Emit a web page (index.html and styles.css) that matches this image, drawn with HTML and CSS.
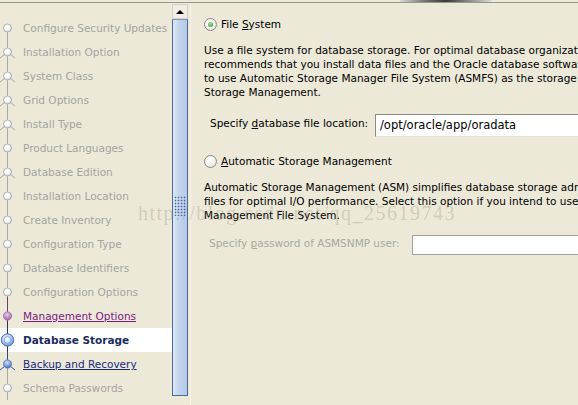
FILE: index.html
```html
<!DOCTYPE html>
<html>
<head>
<meta charset="utf-8">
<link rel="stylesheet" href="styles.css">
</head>
<body>
<div class="topbar"><div class="banner"></div></div>
<div class="main">
  <ul class="steps">
    <li class="step off"><svg class="node" viewBox="0 0 16 24"><defs><radialGradient id="gw" cx="0.45" cy="0.4" r="0.6"><stop offset="0" stop-color="#ffffff"/><stop offset="0.6" stop-color="#f4f4f4"/><stop offset="1" stop-color="#c8c8c8"/></radialGradient><radialGradient id="gp" cx="0.45" cy="0.35" r="0.65"><stop offset="0" stop-color="#e8d0ec"/><stop offset="1" stop-color="#9a5aa0"/></radialGradient><radialGradient id="gb" cx="0.45" cy="0.35" r="0.65"><stop offset="0" stop-color="#d6e4fa"/><stop offset="1" stop-color="#3c68b8"/></radialGradient><radialGradient id="gs" cx="0.45" cy="0.4" r="0.6"><stop offset="0" stop-color="#ffffff"/><stop offset="0.5" stop-color="#c8dcf8"/><stop offset="1" stop-color="#5a88d0"/></radialGradient></defs><line x1="7.5" y1="12" x2="7.5" y2="24" stroke="#a8a8a8"/><circle cx="7.5" cy="12" r="4" fill="url(#gw)" stroke="#b4b4b4"/></svg><span class="label">Configure Security Updates</span></li>
    <li class="step off"><svg class="node" viewBox="0 0 16 24"><line x1="7.5" y1="0" x2="7.5" y2="24" stroke="#a8a8a8"/><path d="M0 18 L7.5 12 L15 18" fill="none" stroke="#a8a8a8"/><circle cx="7.5" cy="12" r="4" fill="url(#gw)" stroke="#b4b4b4"/></svg><span class="label">Installation Option</span></li>
    <li class="step off"><svg class="node" viewBox="0 0 16 24"><line x1="7.5" y1="0" x2="7.5" y2="24" stroke="#a8a8a8"/><path d="M0 18 L7.5 12 L15 18" fill="none" stroke="#a8a8a8"/><circle cx="7.5" cy="12" r="4" fill="url(#gw)" stroke="#b4b4b4"/></svg><span class="label">System Class</span></li>
    <li class="step off"><svg class="node" viewBox="0 0 16 24"><line x1="7.5" y1="0" x2="7.5" y2="24" stroke="#a8a8a8"/><path d="M0 18 L7.5 12 L15 18" fill="none" stroke="#a8a8a8"/><circle cx="7.5" cy="12" r="4" fill="url(#gw)" stroke="#b4b4b4"/></svg><span class="label">Grid Options</span></li>
    <li class="step off"><svg class="node" viewBox="0 0 16 24"><line x1="7.5" y1="0" x2="7.5" y2="24" stroke="#a8a8a8"/><path d="M0 18 L7.5 12 L15 18" fill="none" stroke="#a8a8a8"/><circle cx="7.5" cy="12" r="4" fill="url(#gw)" stroke="#b4b4b4"/></svg><span class="label">Install Type</span></li>
    <li class="step off"><svg class="node" viewBox="0 0 16 24"><line x1="7.5" y1="0" x2="7.5" y2="24" stroke="#a8a8a8"/><circle cx="7.5" cy="12" r="4" fill="url(#gw)" stroke="#b4b4b4"/></svg><span class="label">Product Languages</span></li>
    <li class="step off"><svg class="node" viewBox="0 0 16 24"><line x1="7.5" y1="0" x2="7.5" y2="24" stroke="#a8a8a8"/><path d="M0 18 L7.5 12 L15 18" fill="none" stroke="#a8a8a8"/><circle cx="7.5" cy="12" r="4" fill="url(#gw)" stroke="#b4b4b4"/></svg><span class="label">Database Edition</span></li>
    <li class="step off"><svg class="node" viewBox="0 0 16 24"><line x1="7.5" y1="0" x2="7.5" y2="24" stroke="#a8a8a8"/><circle cx="7.5" cy="12" r="4" fill="url(#gw)" stroke="#b4b4b4"/></svg><span class="label">Installation Location</span></li>
    <li class="step off"><svg class="node" viewBox="0 0 16 24"><line x1="7.5" y1="0" x2="7.5" y2="24" stroke="#a8a8a8"/><circle cx="7.5" cy="12" r="4" fill="url(#gw)" stroke="#b4b4b4"/></svg><span class="label">Create Inventory</span></li>
    <li class="step off"><svg class="node" viewBox="0 0 16 24"><line x1="7.5" y1="0" x2="7.5" y2="24" stroke="#a8a8a8"/><circle cx="7.5" cy="12" r="4" fill="url(#gw)" stroke="#b4b4b4"/></svg><span class="label">Configuration Type</span></li>
    <li class="step off"><svg class="node" viewBox="0 0 16 24"><line x1="7.5" y1="0" x2="7.5" y2="24" stroke="#a8a8a8"/><circle cx="7.5" cy="12" r="4" fill="url(#gw)" stroke="#b4b4b4"/></svg><span class="label">Database Identifiers</span></li>
    <li class="step off"><svg class="node" viewBox="0 0 16 24"><line x1="7.5" y1="0" x2="7.5" y2="12" stroke="#a8a8a8"/><line x1="7.5" y1="12" x2="7.5" y2="24" stroke="#7a3a7a"/><circle cx="7.5" cy="12" r="4" fill="url(#gw)" stroke="#b4b4b4"/></svg><span class="label">Configuration Options</span></li>
    <li class="step done"><svg class="node" viewBox="0 0 16 24"><line x1="7.5" y1="0" x2="7.5" y2="12" stroke="#7a3a7a"/><line x1="7.5" y1="12" x2="7.5" y2="24" stroke="#3a2c5c"/><circle cx="7.5" cy="12" r="4.2" fill="url(#gp)" stroke="#a070a8" stroke-width="0.6"/></svg><a class="label link-done">Management Options</a></li>
    <li class="step current"><svg class="node" viewBox="0 0 16 24"><line x1="7.5" y1="0" x2="7.5" y2="24" stroke="#3a2c5c"/><circle cx="7.5" cy="12" r="6.2" fill="url(#gs)" stroke="#4a78c0" stroke-width="1"/><circle cx="7.5" cy="12" r="3.4" fill="none" stroke="#6e98d8" stroke-width="0.8"/></svg><span class="label">Database Storage</span></li>
    <li class="step next"><svg class="node" viewBox="0 0 16 24"><line x1="7.5" y1="0" x2="7.5" y2="12" stroke="#2c4c8c"/><line x1="7.5" y1="12" x2="7.5" y2="24" stroke="#a8a8a8"/><path d="M0 18 L7.5 12 L15 18" fill="none" stroke="#3c5c9c"/><circle cx="7.5" cy="12" r="4.2" fill="url(#gb)" stroke="#5a80c0" stroke-width="0.6"/></svg><a class="label link-next">Backup and Recovery</a></li>
    <li class="step off"><svg class="node" viewBox="0 0 16 24"><line x1="7.5" y1="0" x2="7.5" y2="24" stroke="#a8a8a8"/><circle cx="7.5" cy="12" r="4" fill="url(#gw)" stroke="#b4b4b4"/></svg><span class="label">Schema Passwords</span></li>
  </ul>

  <div class="scrollbar">
    <div class="scroll-btn"><span class="arrow-up"></span></div>
    <div class="scroll-thumb"><div class="grip"></div></div>
  </div>

  <div class="panel">
    <div class="radio-row">
      <span class="radio checked"></span>
      <span class="radio-text">File <u>S</u>ystem</span>
    </div>
    <div class="para">
      <div class="line">Use a file system for database storage. For optimal database organization and performance, Oracle</div>
      <div class="line">recommends that you install data files and the Oracle database software on different disks. If you want</div>
      <div class="line">to use Automatic Storage Manager File System (ASMFS) as the storage option for database files, use Automatic</div>
      <div class="line">Storage Management.</div>
    </div>
    <div class="field-row loc-row">
      <span class="field-label">Specify <u>d</u>atabase file location:</span>
      <div class="input loc-input">/opt/oracle/app/oradata</div>
    </div>
    <div class="radio-row asm-row">
      <span class="radio"></span>
      <span class="radio-text"><u>A</u>utomatic Storage Management</span>
    </div>
    <div class="para asm-para">
      <div class="line">Automatic Storage Management (ASM) simplifies database storage administration and optimizes database layout</div>
      <div class="line">files for optimal I/O performance. Select this option if you intend to use ASM Cluster File System or Automatic Storage</div>
      <div class="line">Management File System.</div>
    </div>
    <div class="field-row pw-row">
      <span class="field-label disabled">Specify <u>p</u>assword of ASMSNMP user:</span>
      <div class="input pw-input"></div>
    </div>
  </div>
</div>
<div class="watermark">http://blog.csdn.net/qq_25619743</div>
</body>
</html>
```

FILE: styles.css
```css
html, body {
  margin: 0;
  padding: 0;
}
body {
  width: 578px;
  height: 405px;
  overflow: hidden;
  background: #ece9d8;
  font-family: "DejaVu Sans", "Liberation Sans", sans-serif;
  font-size: 10.5px;
  color: #000;
  position: relative;
}
.topbar {
  height: 2px;
  border-bottom: 1px solid #9a988c;
}
.banner {
  margin-left: 400px;
  width: 92px;
  height: 2px;
  background: linear-gradient(to right, #d8d8d8, #6a6a6a 30%, #3a3a3a 50%, #8a8a8a 75%, #dcdcdc);
}
.main {
  display: flex;
  height: 402px;
}
.steps {
  list-style: none;
  margin: 0;
  padding: 13px 0 0 0;
  width: 172px;
  flex: none;
  overflow: hidden;
}
.step {
  display: flex;
  align-items: center;
  height: 24px;
  white-space: nowrap;
}
.node {
  width: 16px;
  height: 24px;
  flex: none;
  display: block;
}
.label {
  margin-left: 7px;
  line-height: 24px;
}
.off .label {
  color: #a4a4a0;
}
.link-done {
  color: #7a1a80;
  text-decoration: underline;
}
.current {
  background: #ffffff;
}
.current .label {
  color: #1c2c5c;
  font-weight: bold;
}
.link-next {
  color: #1a2a7c;
  text-decoration: underline;
}
.scrollbar {
  width: 16px;
  flex: none;
  margin-top: 1px;
  display: flex;
  flex-direction: column;
}
.scroll-btn {
  height: 15px;
  background: #f0eee4;
  border: 1px solid #d8d4c4;
  box-sizing: border-box;
  display: flex;
  justify-content: center;
  align-items: center;
}
.arrow-up {
  width: 0;
  height: 0;
  border-left: 4px solid transparent;
  border-right: 4px solid transparent;
  border-bottom: 4px solid #000;
}
.scroll-thumb {
  height: 377px;
  box-sizing: border-box;
  border: 1px solid #4c6a9c;
  border-top-color: #7a98c8;
  background: linear-gradient(to right, #dce8f8, #c4d6ee 40%, #b4c8e6);
  display: flex;
  justify-content: center;
  padding-top: 176px;
}
.grip {
  width: 12px;
  height: 20px;
  background-image: radial-gradient(circle, #4a66a0 0.7px, transparent 1.1px);
  background-size: 3px 3px;
}
.panel {
  flex: 1;
  margin-left: 2px;
  border-left: 1px solid #f6f4ea;
  padding-left: 13px;
  overflow: hidden;
  white-space: nowrap;
}
.radio-row {
  display: flex;
  align-items: center;
  height: 16px;
  margin-top: 13px;
}
.radio {
  width: 13px;
  height: 13px;
  box-sizing: border-box;
  border-radius: 50%;
  border: 1px solid #8a8a82;
  background: radial-gradient(circle at 40% 35%, #ffffff, #f2f1ea 55%, #d4d2c6);
  display: flex;
  align-items: center;
  justify-content: center;
  flex: none;
}
.radio.checked::after {
  content: "";
  width: 5px;
  height: 5px;
  border-radius: 50%;
  background: radial-gradient(circle at 40% 35%, #9ee09a, #2c9a2c);
}
.radio-text {
  margin-left: 4px;
  line-height: 16px;
}
.para {
  margin-top: 11px;
  line-height: 14px;
}
.field-row {
  display: flex;
  align-items: flex-start;
}
.field-label {
  line-height: 14px;
  flex: none;
}
.field-label.disabled {
  color: #a8a8a0;
}
.input {
  background: #ffffff;
  box-sizing: border-box;
  flex: none;
}
.loc-row {
  margin-top: 15px;
}
.loc-row .field-label {
  margin-left: 6px;
  margin-top: 2px;
  width: 165px;
}
.loc-input {
  height: 23px;
  width: 220px;
  border: 1px solid #8c8a80;
  border-right: none;
  border-bottom-color: #e4e2d8;
  font-size: 11.5px;
  line-height: 21px;
  padding-left: 4px;
}
.asm-row {
  margin-top: 16px;
}
.asm-para {
  margin-top: 11px;
}
.pw-row {
  margin-top: 13px;
}
.pw-row .field-label {
  margin-left: 5px;
  margin-top: 1px;
  width: 203px;
}
.pw-input {
  width: 200px;
  height: 20px;
  border: 1px solid #a4a298;
  border-right: none;
}
.watermark {
  position: absolute;
  left: 138px;
  top: 203px;
  font-family: "Liberation Serif", serif;
  font-size: 20px;
  letter-spacing: 1.5px;
  line-height: 20px;
  color: rgba(120, 118, 110, 0.26);
  white-space: nowrap;
  pointer-events: none;
}
```
